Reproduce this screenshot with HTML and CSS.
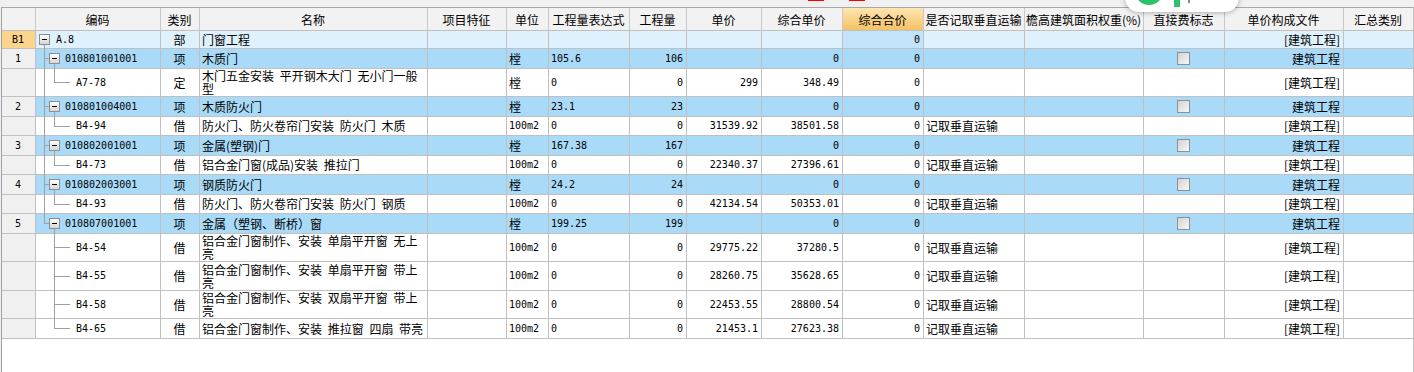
FILE: index.html
```html
<!DOCTYPE html>
<html>
<head lang="zh">
    <meta charset="UTF-8">
    <title>分部分项</title>
    <link rel="stylesheet" href="styles.css">
</head>
<body>
    <div id="topbar">
        <span class="mark red m1"></span>
        <span class="mark red m2"></span>
    </div>
    <div id="float">
        <span class="logo"></span>
        <span class="bar"></span>
        <span class="dot"></span>
    </div>

    <div id="grid">
        <div class="row head">
            <div></div>
            <div>编码</div>
            <div>类别</div>
            <div>名称</div>
            <div>项目特征</div>
            <div>单位</div>
            <div>工程量表达式</div>
            <div>工程量</div>
            <div>单价</div>
            <div>综合单价</div>
            <div class="sel">综合合价</div>
            <div>是否记取垂直运输</div>
            <div>檐高建筑面积权重(%)</div>
            <div>直接费标志</div>
            <div>单价构成文件</div>
            <div>汇总类别</div>
        </div>

        <div class="row b1">
            <div class="no hot"><span class="n">B1</span></div>
            <div class="code lv0"><i class="v down"></i><span class="bx"></span><span class="n">A.8</span></div>
            <div class="c">部</div>
            <div>门窗工程</div>
            <div></div><div></div><div></div><div></div><div></div><div></div>
            <div class="r n cur">0</div>
            <div></div><div></div><div></div>
            <div class="r">[建筑工程]</div>
            <div></div>
        </div>

        <!-- 1 -->
        <div class="row item">
            <div class="no n">1</div>
            <div class="code lv1"><i class="v"></i><i class="h"></i><i class="v2 down"></i><span class="bx"></span><span class="n">010801001001</span></div>
            <div class="c">项</div>
            <div>木质门</div>
            <div></div>
            <div>樘</div>
            <div class="n">105.6</div>
            <div class="r n">106</div>
            <div></div>
            <div class="r n">0</div>
            <div class="r n">0</div>
            <div></div><div></div>
            <div class="c"><span class="cb"></span></div>
            <div class="r">建筑工程</div>
            <div></div>
        </div>
        <div class="row tall">
            <div class="no"></div>
            <div class="code lv2"><i class="v"></i><i class="v2 up"></i><i class="h2"></i><span class="n">A7-78</span></div>
            <div class="c">定</div>
            <div class="wrap">木门五金安装 平开钢木大门 无小门一般<br>型</div>
            <div></div>
            <div>樘</div>
            <div class="n">0</div>
            <div class="r n">0</div>
            <div class="r n">299</div>
            <div class="r n">348.49</div>
            <div class="r n">0</div>
            <div></div><div></div><div></div>
            <div class="r">[建筑工程]</div>
            <div></div>
        </div>

        <!-- 2 -->
        <div class="row item">
            <div class="no n">2</div>
            <div class="code lv1"><i class="v"></i><i class="h"></i><i class="v2 down"></i><span class="bx"></span><span class="n">010801004001</span></div>
            <div class="c">项</div>
            <div>木质防火门</div>
            <div></div>
            <div>樘</div>
            <div class="n">23.1</div>
            <div class="r n">23</div>
            <div></div>
            <div class="r n">0</div>
            <div class="r n">0</div>
            <div></div><div></div>
            <div class="c"><span class="cb"></span></div>
            <div class="r">建筑工程</div>
            <div></div>
        </div>
        <div class="row">
            <div class="no"></div>
            <div class="code lv2"><i class="v"></i><i class="v2 up"></i><i class="h2"></i><span class="n">B4-94</span></div>
            <div class="c">借</div>
            <div>防火门、防火卷帘门安装 防火门 木质</div>
            <div></div>
            <div class="n">100m2</div>
            <div class="n">0</div>
            <div class="r n">0</div>
            <div class="r n">31539.92</div>
            <div class="r n">38501.58</div>
            <div class="r n">0</div>
            <div>记取垂直运输</div>
            <div></div><div></div>
            <div class="r">[建筑工程]</div>
            <div></div>
        </div>

        <!-- 3 -->
        <div class="row item">
            <div class="no n">3</div>
            <div class="code lv1"><i class="v"></i><i class="h"></i><i class="v2 down"></i><span class="bx"></span><span class="n">010802001001</span></div>
            <div class="c">项</div>
            <div>金属(塑钢)门</div>
            <div></div>
            <div>樘</div>
            <div class="n">167.38</div>
            <div class="r n">167</div>
            <div></div>
            <div class="r n">0</div>
            <div class="r n">0</div>
            <div></div><div></div>
            <div class="c"><span class="cb"></span></div>
            <div class="r">建筑工程</div>
            <div></div>
        </div>
        <div class="row">
            <div class="no"></div>
            <div class="code lv2"><i class="v"></i><i class="v2 up"></i><i class="h2"></i><span class="n">B4-73</span></div>
            <div class="c">借</div>
            <div>铝合金门窗(成品)安装 推拉门</div>
            <div></div>
            <div class="n">100m2</div>
            <div class="n">0</div>
            <div class="r n">0</div>
            <div class="r n">22340.37</div>
            <div class="r n">27396.61</div>
            <div class="r n">0</div>
            <div>记取垂直运输</div>
            <div></div><div></div>
            <div class="r">[建筑工程]</div>
            <div></div>
        </div>

        <!-- 4 -->
        <div class="row item">
            <div class="no n">4</div>
            <div class="code lv1"><i class="v"></i><i class="h"></i><i class="v2 down"></i><span class="bx"></span><span class="n">010802003001</span></div>
            <div class="c">项</div>
            <div>钢质防火门</div>
            <div></div>
            <div>樘</div>
            <div class="n">24.2</div>
            <div class="r n">24</div>
            <div></div>
            <div class="r n">0</div>
            <div class="r n">0</div>
            <div></div><div></div>
            <div class="c"><span class="cb"></span></div>
            <div class="r">建筑工程</div>
            <div></div>
        </div>
        <div class="row">
            <div class="no"></div>
            <div class="code lv2"><i class="v"></i><i class="v2 up"></i><i class="h2"></i><span class="n">B4-93</span></div>
            <div class="c">借</div>
            <div>防火门、防火卷帘门安装 防火门 钢质</div>
            <div></div>
            <div class="n">100m2</div>
            <div class="n">0</div>
            <div class="r n">0</div>
            <div class="r n">42134.54</div>
            <div class="r n">50353.01</div>
            <div class="r n">0</div>
            <div>记取垂直运输</div>
            <div></div><div></div>
            <div class="r">[建筑工程]</div>
            <div></div>
        </div>

        <!-- 5 -->
        <div class="row item">
            <div class="no n">5</div>
            <div class="code lv1"><i class="v up"></i><i class="h"></i><i class="v2 down"></i><span class="bx"></span><span class="n">010807001001</span></div>
            <div class="c">项</div>
            <div>金属（塑钢、断桥）窗</div>
            <div></div>
            <div>樘</div>
            <div class="n">199.25</div>
            <div class="r n">199</div>
            <div></div>
            <div class="r n">0</div>
            <div class="r n">0</div>
            <div></div><div></div>
            <div class="c"><span class="cb"></span></div>
            <div class="r">建筑工程</div>
            <div></div>
        </div>
        <div class="row tall">
            <div class="no"></div>
            <div class="code lv2"><i class="v2"></i><i class="h2"></i><span class="n">B4-54</span></div>
            <div class="c">借</div>
            <div class="wrap">铝合金门窗制作、安装 单扇平开窗 无上<br>亮</div>
            <div></div>
            <div class="n">100m2</div>
            <div class="n">0</div>
            <div class="r n">0</div>
            <div class="r n">29775.22</div>
            <div class="r n">37280.5</div>
            <div class="r n">0</div>
            <div>记取垂直运输</div>
            <div></div><div></div>
            <div class="r">[建筑工程]</div>
            <div></div>
        </div>
        <div class="row tall">
            <div class="no"></div>
            <div class="code lv2"><i class="v2"></i><i class="h2"></i><span class="n">B4-55</span></div>
            <div class="c">借</div>
            <div class="wrap">铝合金门窗制作、安装 单扇平开窗 带上<br>亮</div>
            <div></div>
            <div class="n">100m2</div>
            <div class="n">0</div>
            <div class="r n">0</div>
            <div class="r n">28260.75</div>
            <div class="r n">35628.65</div>
            <div class="r n">0</div>
            <div>记取垂直运输</div>
            <div></div><div></div>
            <div class="r">[建筑工程]</div>
            <div></div>
        </div>
        <div class="row tall">
            <div class="no"></div>
            <div class="code lv2"><i class="v2"></i><i class="h2"></i><span class="n">B4-58</span></div>
            <div class="c">借</div>
            <div class="wrap">铝合金门窗制作、安装 双扇平开窗 带上<br>亮</div>
            <div></div>
            <div class="n">100m2</div>
            <div class="n">0</div>
            <div class="r n">0</div>
            <div class="r n">22453.55</div>
            <div class="r n">28800.54</div>
            <div class="r n">0</div>
            <div>记取垂直运输</div>
            <div></div><div></div>
            <div class="r">[建筑工程]</div>
            <div></div>
        </div>
        <div class="row">
            <div class="no"></div>
            <div class="code lv2"><i class="v2 up"></i><i class="h2"></i><span class="n">B4-65</span></div>
            <div class="c">借</div>
            <div>铝合金门窗制作、安装 推拉窗 四扇 带亮</div>
            <div></div>
            <div class="n">100m2</div>
            <div class="n">0</div>
            <div class="r n">0</div>
            <div class="r n">21453.1</div>
            <div class="r n">27623.38</div>
            <div class="r n">0</div>
            <div>记取垂直运输</div>
            <div></div><div></div>
            <div class="r">[建筑工程]</div>
            <div></div>
        </div>
    </div>
</body>
</html>
```

FILE: styles.css
```css
*{
    margin:0;
    padding:0;
    box-sizing:border-box;
}
body{
    width:1414px;
    height:372px;
    overflow:hidden;
    position:relative;
    background:#f0f0f0;
    color:#000;
    font-size:12px;
    font-family:"Noto Sans CJK SC", sans-serif;
    word-spacing:3px;
}
#topbar{
    height:7px;
}
.mark{
    position:absolute;
    top:0;
    height:1px;
}
.red{
    background:#f00;
    width:16px;
}
.m1{ left:808px; }
.m2{ left:849px; }

/* floating widget over the header */
#float{
    position:absolute;
    left:1125px;
    top:-20px;
    width:114px;
    height:32px;
    background:#fff;
    border-radius:14px;
    box-shadow:0 1px 5px rgba(0,0,0,.28);
    overflow:hidden;
    z-index:5;
}
#float .logo{
    position:absolute;
    left:10px;
    top:-3px;
    width:28px;
    height:28px;
    border-radius:50%;
    background:#2dc26c;
}
#float .bar{
    position:absolute;
    left:49px;
    top:20px;
    width:6px;
    height:7px;
    background:#2dc26c;
}
#float .dot{
    position:absolute;
    left:63px;
    top:20px;
    width:2px;
    height:3px;
    background:#8a8a8a;
}

#grid{
    margin-left:1px;
    width:1413px;
    height:365px;
    border-top:1px solid #a8a8a8;
    border-left:1px solid #a0a0a0;
    border-right:1px solid #c0c0c0;
    background:#fff;
}
.row{
    display:grid;
    grid-template-columns:34px 125px 39px 228px 79px 42px 81px 57px 75px 81px 81px 101px 119px 81px 119px 69px;
    height:19.5px;
}
.row > div{
    display:flex;
    align-items:center;
    padding:0 3px 0 2px;
    border-right:1px solid #c0c0c0;
    border-bottom:1px solid #c0c0c0;
    white-space:nowrap;
    overflow:hidden;
}
.row > div:last-child{
    border-right:0;
}
.row.tall{
    height:28.5px;
}
.row.b1{
    height:18px;
    background:#dff1fd;
}
.row.item{
    background:#a9dbf9;
}

.head{
    height:23px !important;
    background:#f2f2f2;
    word-spacing:0;
}
.head > div{
    justify-content:center;
    border-right-color:#c8c8c8 !important;
}
.head .sel{
    background:linear-gradient(#fde6b2,#f5c164);
}

.no{
    justify-content:center;
    background:#f0f0f0;
}
.no.hot{
    background:#fdd48c;
}
.cur{
    background:#c3e3fb;
}
.c{ justify-content:center; }
.r{ justify-content:flex-end; }
.n{
    font-family:"DejaVu Sans Mono", monospace;
    font-size:10px;
    word-spacing:0;
}
.wrap{
    white-space:normal !important;
    line-height:13px;
}

/* tree column */
.code{
    position:relative;
    overflow:visible !important;
}
.lv0{ padding-left:3px !important; }
.lv1{ padding-left:13px !important; }
.lv2{ padding-left:40px !important; }
.code i{
    position:absolute;
    background:#a0a0a0;
}
.code .v,
.code .v2{
    width:1px;
    top:0;
    bottom:-1px;
}
.code .v{ left:8px; }
.code .v2{ left:18px; }
.code .down{ top:50%; }
.code .up{ bottom:50%; }
.code .h{
    left:8px;
    width:5px;
    height:1px;
    top:50%;
}
.code .h2{
    left:18px;
    width:16px;
    height:1px;
    top:50%;
}
.bx{
    position:relative;
    z-index:1;
    width:11px;
    height:11px;
    margin-right:6px;
    border:1px solid #8e8e8e;
    background:linear-gradient(#fff,#d6d6d6);
    flex:none;
}
.lv1 .bx{ margin-right:5px; }
.bx::after{
    content:"";
    position:absolute;
    left:2px;
    top:4px;
    width:5px;
    height:1px;
    background:#000;
}
.cb{
    width:13px;
    height:13px;
    border:1px solid #8f8f8f;
    background:linear-gradient(135deg,#d2d2d2,#f8f8f8);
}
```
